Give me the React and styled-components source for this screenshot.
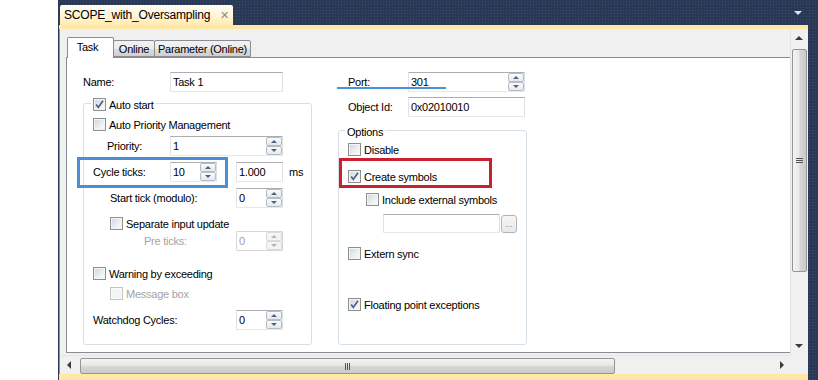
import styled, { createGlobalStyle } from 'styled-components'

const GlobalStyle = createGlobalStyle`
  html, body { margin: 0; padding: 0; background: #ffffff; }
  body {
    font-family: 'Liberation Sans', Arial, sans-serif;
    font-size: 11px;
    letter-spacing: -0.25px;
    color: #000;
  }
  * { box-sizing: border-box; }
`

const Page = styled.div`
  width: 818px;
  height: 380px;
  display: flex;
  overflow: hidden;
  background: #fff;
`

const Frame = styled.div`
  margin-left: 58px;
  flex: 1;
  display: flex;
  flex-direction: column;
  padding: 5px 10px 0 1px;
  background-color: #293955;
  background-image: radial-gradient(#3b4d6f 0.8px, transparent 0.9px);
  background-size: 3px 3px;
`

const DocTabRow = styled.div`
  height: 20px;
  display: flex;
  align-items: stretch;
`

const DocTab = styled.div`
  width: 173px;
  margin-left: 1px;
  padding-left: 4px;
  display: flex;
  align-items: center;
  gap: 10px;
  border-radius: 2px 2px 0 0;
  background: linear-gradient(#fffcf4, #fff4d6 55%, #ffeab0);
  font-size: 12px;
  letter-spacing: -0.2px;
`

const CloseGlyph = styled.span`
  color: #8a8a8a;
  font-size: 11px;
`

const MenuArrow = styled.span`
  margin: 10px 6px 0 auto;
`

const AccentStrip = styled.div`
  height: ${p => p.$h}px;
  background: #ffe8a6;
  flex: none;
`

const DocBody = styled.div`
  flex: 1;
  min-height: 0;
  display: grid;
  grid-template-columns: 1fr 16px;
  grid-template-rows: 1fr 19px;
  padding-right: 2px;
  background: #f0f0f0;
  border-left: 1px solid #8d8f94;
`

const Viewport = styled.div`
  overflow: hidden;
  padding: 8px 0 0 6px;
  background: #f0f0f0;
`

const TabStrip = styled.div`
  display: flex;
  align-items: flex-end;
  height: 20px;
  padding-left: 1px;
`

const Tab = styled.div`
  position: relative;
  z-index: ${p => (p.$active ? 1 : 0)};
  width: ${p => p.$w}px;
  height: ${p => (p.$active ? 21 : 17)}px;
  margin-bottom: ${p => (p.$active ? -1 : 0)}px;
  margin-left: ${p => (p.$first ? 0 : -1)}px;
  display: flex;
  align-items: center;
  justify-content: center;
  padding-right: ${p => p.$pr || 0}px;
  padding-bottom: ${p => (p.$active ? 2 : 0)}px;
  border: 1px solid #898c95;
  border-bottom: ${p => (p.$active ? 'none' : '1px solid #898c95')};
  border-radius: 2px 2px 0 0;
  background: ${p =>
    p.$active ? '#fff' : 'linear-gradient(#f2f2f2, #ebebeb 50%, #dddddd 51%, #cfcfcf)'};
`

const Panel = styled.div`
  width: 760px;
  height: 296px;
  border: 1px solid #898c95;
  background: #fff;
  padding: 14px 0 0 16px;
  display: flex;
  gap: 26px;
`

const Column = styled.div`
  width: ${p => p.$w}px;
  flex: none;
  display: flex;
  flex-direction: column;
`

const Row = styled.div`
  position: relative;
  display: flex;
  align-items: center;
  height: ${p => p.$h || 20}px;
  margin-top: ${p => p.$mt || 0}px;
  padding-left: ${p => p.$indent || 0}px;
  flex: none;
`

const Label = styled.span`
  width: ${p => (p.$w ? `${p.$w}px` : 'auto')};
  margin-left: ${p => p.$ml || 0}px;
  flex: none;
  white-space: nowrap;
  color: ${p => (p.$disabled ? '#a3a3a3' : '#000')};
`

const PortRow = styled(Row)`
  &::after {
    content: '';
    position: absolute;
    left: -1px;
    top: 15px;
    width: 109px;
    height: 2px;
    background: #4b92d8;
  }
`

const GroupBox = styled.div`
  margin-top: ${p => p.$mt}px;
  height: ${p => p.$h}px;
  border: 1px solid #d5dfe5;
  border-radius: 3px;
  display: flex;
  flex-direction: column;
`

const Legend = styled.div`
  display: flex;
  align-items: center;
  gap: 3px;
  width: fit-content;
  height: 13px;
  margin: -6px 0 0 ${p => p.$ml}px;
  padding: 0 2px;
  background: #fff;
`

const Box = styled.span`
  position: relative;
  flex: none;
  width: 13px;
  height: 13px;
  border: 1px solid ${p => (p.$disabled ? '#c4c4c4' : '#8e8f8f')};
  background: ${p =>
    p.$disabled ? '#f4f4f4' : 'linear-gradient(135deg, #d0d3d8, #eef0f2 60%, #fbfbfb)'};
  box-shadow: inset 0 0 0 1px ${p => (p.$disabled ? '#fafafa' : '#f4f4f4')};
  svg { position: absolute; left: 0; top: 0; }
`

const CheckLine = styled(Row)`
  gap: 3px;
`

const Highlight = styled.div`
  display: flex;
  align-items: center;
  flex: none;
  border: 3px solid #4a8fd6;
  margin: -5px -11px -6px -16px;
  padding: 2px 8px 3px 13px;
`

const Marked = styled.div`
  display: flex;
  align-items: center;
  gap: 3px;
  width: 153px;
  margin-top: 2px;
  border: 3px solid #c9212f;
  padding: 9px 0 2px 6px;
`

const Field = styled.div`
  position: relative;
  width: ${p => p.$w}px;
  height: ${p => p.$h || 20}px;
  margin-left: ${p => p.$ml || 0}px;
  flex: none;
  display: flex;
  align-items: center;
  padding-left: 2px;
  border: 1px solid;
  border-color: ${p =>
    p.$disabled ? '#d6d6d6' : '#abadb3 #dbdfe6 #e3e9ef #e2e3ea'};
  border-radius: 1px;
  background: #fff;
  color: ${p => (p.$disabled ? '#a3a3a3' : '#000')};
`

const SpinButtons = styled.div`
  margin-left: auto;
  width: 17px;
  height: 100%;
  display: flex;
  flex-direction: column;
  padding: 0 0 0 1px;
`

const SpinHalf = styled.div`
  flex: 1;
  display: flex;
  align-items: center;
  justify-content: center;
  border: 1px solid ${p => (p.$disabled ? '#dadada' : '#b4bcc6')};
  border-radius: 2px;
  background: ${p => (p.$disabled ? '#f4f4f4' : 'linear-gradient(#fbfbfb, #e6e8eb)')};
`

const DotsButton = styled.div`
  width: 16px;
  height: 18px;
  margin-left: 1px;
  display: flex;
  align-items: flex-end;
  justify-content: center;
  padding-bottom: 3px;
  border: 1px solid #b4b4b4;
  border-radius: 3px;
  background: linear-gradient(#f6f6f6, #e9e9e9);
  color: #8a8a8a;
  font-size: 9px;
  letter-spacing: 0;
`

const Triangle = styled.span`
  flex: none;
  width: 0;
  height: 0;
  ${({ $dir, $w = 6, $h = 3, $c = '#3c3c3c' }) => {
    const half = $w / 2
    if ($dir === 'up')
      return `border-left:${half}px solid transparent;border-right:${half}px solid transparent;border-bottom:${$h}px solid ${$c};`
    if ($dir === 'down')
      return `border-left:${half}px solid transparent;border-right:${half}px solid transparent;border-top:${$h}px solid ${$c};`
    if ($dir === 'left')
      return `border-top:${half}px solid transparent;border-bottom:${half}px solid transparent;border-right:${$h}px solid ${$c};`
    return `border-top:${half}px solid transparent;border-bottom:${half}px solid transparent;border-left:${$h}px solid ${$c};`
  }}
`

const VScroll = styled.div`
  display: flex;
  flex-direction: column;
  align-items: center;
  background: #f0f0f0;
  border-left: 1px solid #e4e4e4;
`

const ArrowCell = styled.div`
  flex: none;
  width: ${p => p.$w || 16}px;
  height: ${p => p.$h || 16}px;
  display: flex;
  align-items: center;
  justify-content: center;
`

const VThumb = styled.div`
  width: 15px;
  height: 223px;
  margin: 2px 0 0 1px;
  display: flex;
  align-items: center;
  justify-content: center;
  border: 1px solid #959595;
  border-radius: 2px;
  background: linear-gradient(90deg, #f4f4f4, #e8e8e8 45%, #d6d6d6 55%, #cacaca);
`

const HScroll = styled.div`
  display: flex;
  align-items: center;
  background: #f0f0f0;
  border-top: 1px solid #e6e6e6;
`

const HThumb = styled.div`
  width: 535px;
  height: 16px;
  margin: 2px 0 0 3px;
  display: flex;
  align-items: center;
  justify-content: center;
  border: 1px solid #959595;
  border-radius: 2px;
  background: linear-gradient(#f4f4f4, #e8e8e8 45%, #d6d6d6 55%, #cacaca);
`

const Spacer = styled.div`
  flex: 1;
`

const Corner = styled.div`
  background: #f0f0f0;
`

const Check = ({ checked, disabled }) => (
  <Box $disabled={disabled}>
    {checked && (
      <svg width="11" height="11" viewBox="0 0 11 11">
        <path d="M2.2 5.6 L4.3 8.4 L9 1.8" fill="none" stroke="#4a5d8c" strokeWidth="1.7" />
      </svg>
    )}
  </Box>
)

const Spin = ({ value, w, ml, disabled }) => (
  <Field $w={w} $ml={ml} $disabled={disabled}>
    {value}
    <SpinButtons>
      <SpinHalf $disabled={disabled}>
        <Triangle $dir="up" $w={6} $h={3} $c={disabled ? '#b5b5b5' : '#4d6388'} />
      </SpinHalf>
      <SpinHalf $disabled={disabled}>
        <Triangle $dir="down" $w={6} $h={3} $c={disabled ? '#b5b5b5' : '#4d6388'} />
      </SpinHalf>
    </SpinButtons>
  </Field>
)

const CheckItem = ({ label, checked, disabled, indent, mt }) => (
  <CheckLine $h={13} $mt={mt} $indent={indent}>
    <Check checked={checked} disabled={disabled} />
    <Label $disabled={disabled}>{label}</Label>
  </CheckLine>
)

const Grip = ({ vertical }) => (
  <svg width={vertical ? 7 : 6} height={vertical ? 6 : 7} viewBox={vertical ? '0 0 7 6' : '0 0 6 7'}>
    {[0, 2, 4].map(o =>
      vertical ? (
        <rect key={o} x="0" y={o} width="7" height="1" fill="#555" />
      ) : (
        <rect key={o} x={o} y="0" width="1" height="7" fill="#555" />
      )
    )}
  </svg>
)

const App = () => (
  <Page>
    <GlobalStyle />
    <Frame>
      <DocTabRow>
        <DocTab>
          SCOPE_with_Oversampling
          <CloseGlyph>✕</CloseGlyph>
        </DocTab>
        <MenuArrow>
          <Triangle $dir="down" $w={8} $h={4} $c="#dfe5ef" />
        </MenuArrow>
      </DocTabRow>
      <AccentStrip $h={4} />
      <DocBody>
        <Viewport>
          <TabStrip>
            <Tab $active $first $w={47} $pr={6}>Task</Tab>
            <Tab $w={42}>Online</Tab>
            <Tab $w={97}>Parameter (Online)</Tab>
          </TabStrip>
          <Panel>
            <Column $w={229}>
              <Row>
                <Label $w={87}>Name:</Label>
                <Field $w={113}>Task 1</Field>
              </Row>
              <GroupBox $mt={11} $h={242}>
                <Legend $ml={7}>
                  <Check checked />
                  <Label>Auto start</Label>
                </Legend>
                <CheckItem label="Auto Priority Management" indent={9} mt={7} />
                <Row $mt={5} $indent={23}>
                  <Label $w={63}>Priority:</Label>
                  <Spin value="1" w={113} />
                </Row>
                <Row $mt={6} $indent={9}>
                  <Highlight>
                    <Label $w={77}>Cycle ticks:</Label>
                    <Spin value="10" w={47} />
                  </Highlight>
                  <Field $w={47} $ml={19}>1.000</Field>
                  <Label $ml={6}>ms</Label>
                </Row>
                <Row $mt={6} $indent={26}>
                  <Label $w={126}>Start tick (modulo):</Label>
                  <Spin value="0" w={47} />
                </Row>
                <CheckItem label="Separate input update" indent={26} mt={9} />
                <Row $mt={1} $indent={60}>
                  <Label $w={92} $disabled>Pre ticks:</Label>
                  <Spin value="0" w={47} disabled />
                </Row>
                <CheckItem label="Warning by exceeding" indent={9} mt={16} />
                <CheckItem label="Message box" indent={26} mt={7} disabled />
                <Row $mt={10} $indent={9}>
                  <Label $w={143}>Watchdog Cycles:</Label>
                  <Spin value="0" w={47} />
                </Row>
              </GroupBox>
            </Column>
            <Column $w={189}>
              <PortRow $indent={10}>
                <Label $w={60}>Port:</Label>
                <Spin value="301" w={117} />
              </PortRow>
              <Row $mt={5} $indent={10}>
                <Label $w={60}>Object Id:</Label>
                <Field $w={117}>0x02010010</Field>
              </Row>
              <GroupBox $mt={13} $h={215}>
                <Legend $ml={6}>
                  <Label>Options</Label>
                </Legend>
                <CheckItem label="Disable" indent={9} mt={5} />
                <Marked>
                  <Check checked />
                  <Label>Create symbols</Label>
                </Marked>
                <CheckItem label="Include external symbols" indent={27} mt={5} />
                <Row $mt={8} $indent={44} $h={19}>
                  <Field $w={117} $h={19} />
                  <DotsButton>...</DotsButton>
                </Row>
                <CheckItem label="Extern sync" indent={9} mt={14} />
                <CheckItem label="Floating point exceptions" indent={9} mt={38} checked />
              </GroupBox>
            </Column>
          </Panel>
        </Viewport>
        <VScroll>
          <ArrowCell $h={18}>
            <Triangle $dir="up" $w={8} $h={4} />
          </ArrowCell>
          <VThumb>
            <Grip vertical />
          </VThumb>
          <Spacer />
          <ArrowCell $h={18}>
            <Triangle $dir="down" $w={8} $h={4} />
          </ArrowCell>
        </VScroll>
        <HScroll>
          <ArrowCell $w={17} $h={17}>
            <Triangle $dir="left" $w={8} $h={4} />
          </ArrowCell>
          <HThumb>
            <Grip />
          </HThumb>
          <Spacer />
          <ArrowCell $w={17} $h={17}>
            <Triangle $dir="right" $w={8} $h={4} />
          </ArrowCell>
        </HScroll>
        <Corner />
      </DocBody>
      <AccentStrip $h={6} />
    </Frame>
  </Page>
)

export default App
